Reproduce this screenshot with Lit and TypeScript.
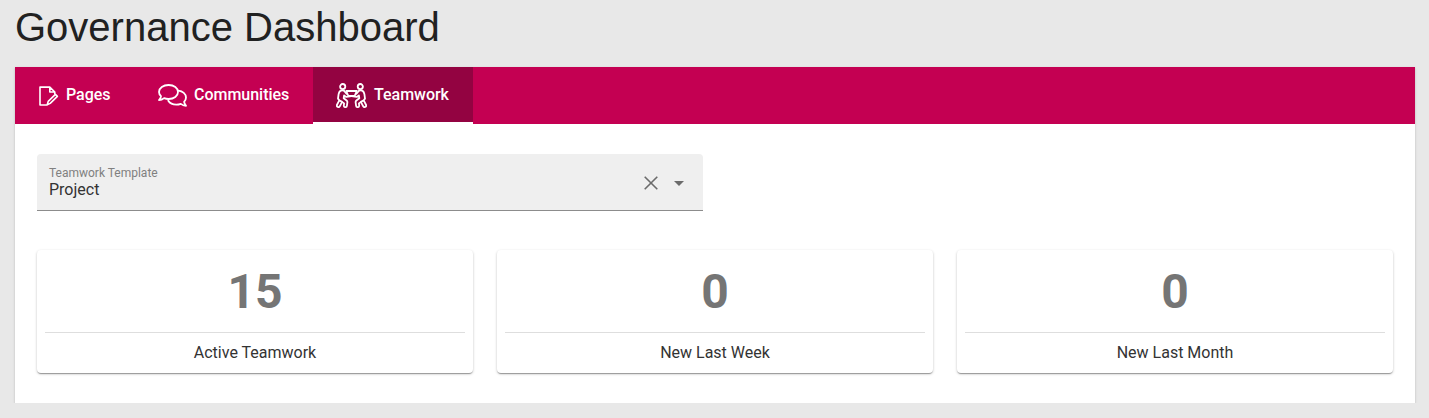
import { LitElement, html, css, svg } from "lit";
import { customElement } from "lit/decorators.js";

const pagesIcon = html`<svg class="pages" width="20" height="20" viewBox="0 0 20 20">
  <path d="M7.400 19H1V1.100h9.800L15.800 6v1.800M10.800 1.300V6h5" />
  <path d="M9.200 15.400l7.200-7 2 2-7.200 7-3 1.400z" />
</svg>`;

const chatIcon = html`<svg width="29" height="23" viewBox="0 0 29 23">
  <path d="M10.600 1C16 1 20 4 20 8s-4 7-9.400 7c-1.700 0-3.200-.3-4.500-.9C4.800 15.200 3 16.100 1 16.100c1.100-1.200 1.900-2.600 2-4C1.700 11 1 9.600 1 8c0-4 4.200-7 9.600-7z" />
  <path d="M20.400 6.600c4.200.5 7.600 3.400 7.600 7 0 1.700-.7 3.100-1.900 4.300.2 1.400 1 2.700 1.900 3.900-2 0-3.900-.8-5.200-1.900-1.400.5-2.900.8-4.500.8-3.500 0-6.500-1.500-8-3.900" />
</svg>`;

const person = svg`
  <circle cx="6.700" cy="3.600" r="2.600" />
  <path d="M5 7.600C3.400 8 2.900 9.600 2.600 11.200L2 15.600l1.300 1.700L.9 22c-.6 1.900 2 2.900 2.900 1.300l2.300-4.400 2 1.500-.3 2.300c0 1.900 2.800 1.900 3.100.1l.5-3.700c0-.7-.3-1.200-.8-1.600L7.700 15.200l.4-2.700 2.200 1.400 5.200-.9M5 7.600c1.900-.7 3.300 0 3.900 1.100l1.600 2.100M3.300 17.300l2.800 1.600" />`;

const teamIcon = html`<svg class="team" width="31" height="25" viewBox="0 0 31 25">
  <g>${person}</g>
  <g transform="translate(31 0) scale(-1 1)">${person}</g>
  <path d="M10.200 8h10.600l-2.200 5h-6.200z" />
</svg>`;

@customElement("app-root")
class AppRoot extends LitElement {
  static styles = css`
    :host { display: block; height: 418px; overflow: hidden; background: #e8e8e8; color: #212121;
      font: 400 16px/20px Roboto, sans-serif; box-sizing: border-box; padding: 0 14px 0 15px; }
    h1 { margin: 0; height: 67px; font-family: "Liberation Sans", Arial, sans-serif; font-size: 40px; line-height: 54px; font-weight: 400; white-space: nowrap; }
    .panel { height: 336px; background: #fff; clip-path: inset(-5px -5px 0 -5px);
      box-shadow: 0 2px 1px -1px rgba(0,0,0,.2), 0 1px 1px rgba(0,0,0,.14), 0 1px 3px rgba(0,0,0,.12); }
    .tabs { display: flex; height: 57px; background: #c40052; color: #fff; font-weight: 500; letter-spacing: -0.02px; }
    .tab { display: flex; align-items: center; box-sizing: border-box; padding: 0 24px; gap: 7px; height: 57px; width: 179px; white-space: nowrap; }
    .tab:first-child { width: 119px; }
    .tab span { line-height: 20px; padding-bottom: 2px; }
    .tab svg { flex: none; fill: none; stroke: #fff; stroke-width: 1.8; stroke-linejoin: round; stroke-linecap: round; }
    .tab svg.pages { stroke-width: 1.6; }
    .tab svg.team { stroke-width: 1.8; }
    .tab.active { background: #930341; border-bottom: 2px solid #fff; padding-top: 2px; width: 160px; padding-left: 23px; }
    .content { padding: 30px 22px 0; }
    .field { display: flex; align-items: center; box-sizing: border-box; width: 666px; height: 57px; padding: 2px 18px 0 12px;
      background: #efefef; border-bottom: 1px solid #8c8c8c; border-radius: 4px 4px 0 0; }
    .value { flex: 1; line-height: 18px; color: #333; }
    .label { display: block; font-size: 12px; line-height: 14px; margin-top: -1px; padding-bottom: 1px; color: #808080; }
    .field svg { display: block; }
    .clear { margin-right: 15px; fill: none; stroke: #6b6b6b; stroke-width: 1.6; }
    .arrow { fill: #6b6b6b; }
    .cards { display: grid; grid-template-columns: repeat(3, 1fr); gap: 24px; margin-top: 39px; }
    .card { box-sizing: border-box; height: 123px; padding: 0 8px; background: #fff; border-radius: 4px; text-align: center;
      box-shadow: 0 2px 1px -1px rgba(0,0,0,.2), 0 1px 1px rgba(0,0,0,.14), 0 1px 3px rgba(0,0,0,.2); }
    .count { height: 82px; border-bottom: 1px solid #dedede; font-size: 48px; line-height: 84px; font-weight: 700; color: #757575; }
    .caption { line-height: 40px; color: #333; }
  `;

  render() {
    const tabs = [
      { icon: pagesIcon, text: "Pages" },
      { icon: chatIcon, text: "Communities" },
      { icon: teamIcon, text: "Teamwork", active: true },
    ];
    const cards = [[15, "Active Teamwork"], [0, "New Last Week"], [0, "New Last Month"]];
    return html`
      <h1>Governance Dashboard</h1>
      <section class="panel">
        <nav class="tabs">
          ${tabs.map((t) => html`<div class="tab ${t.active ? "active" : ""}">${t.icon}<span>${t.text}</span></div>`)}
        </nav>
        <div class="content">
          <div class="field">
            <div class="value"><span class="label">Teamwork Template</span>Project</div>
            <svg class="clear" width="14" height="14" viewBox="0 0 14 14"><path d="M.7.700l12.600 12.600M13.300.700L.7 13.300" /></svg>
            <svg class="arrow" width="12" height="6" viewBox="0 0 12 6"><path d="M1 1h10L6 6z" /></svg>
          </div>
          <div class="cards">
            ${cards.map(([n, c]) => html`<div class="card"><div class="count">${n}</div><div class="caption">${c}</div></div>`)}
          </div>
        </div>
      </section>
    `;
  }
}
